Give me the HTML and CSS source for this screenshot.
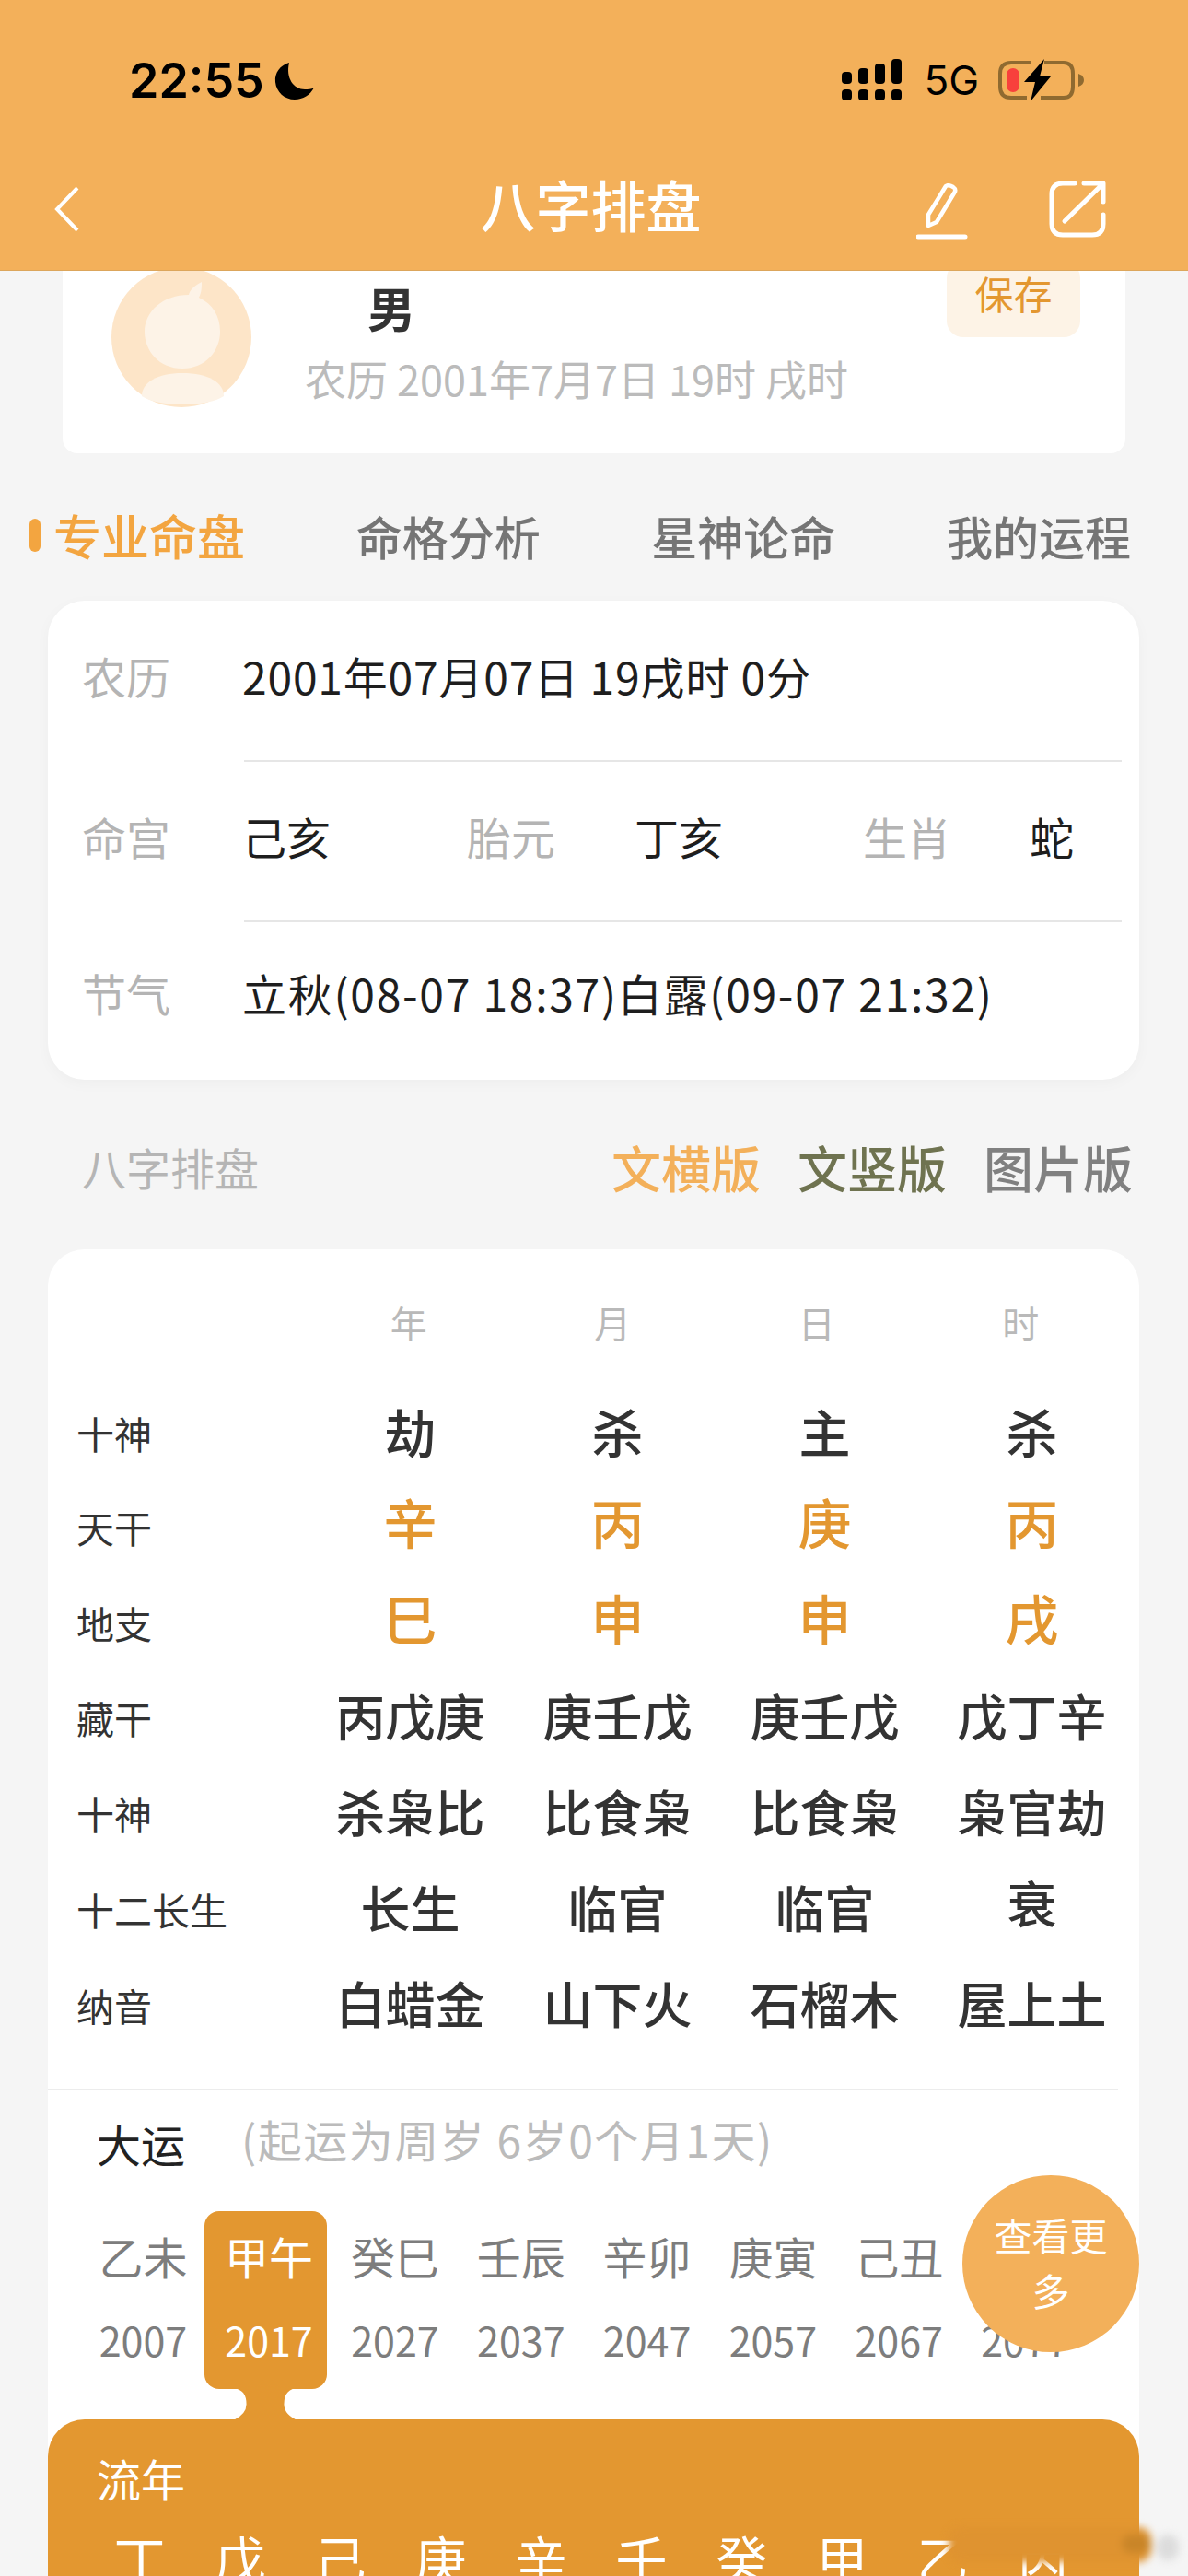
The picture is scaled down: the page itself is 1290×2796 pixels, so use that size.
FILE: index.html
```html
<!DOCTYPE html>
<html lang="zh-CN">
<head>
    <meta charset="UTF-8">
    <meta name="viewport" content="width=device-width, initial-scale=1.0">
    <title>八字排盘</title>
    <link rel="stylesheet" href="styles.css">
</head>
<body>
    <div class="page">
        <header class="header">
            <div class="status-bar">
                <div class="status-left">
                    <span class="time">22:55</span>
                    <svg class="moon" viewBox="0 0 44 42"><path d="M16 1C6 4 0 12 1 22c1 11 10 19 21 19 9 0 17-5 21-13-3 2-7 2-10 2C21 30 12 18 16 1z" fill="#000"/></svg>
                </div>
                <div class="status-right">
                    <svg class="signal" viewBox="0 0 66 46">
                        <g fill="#000">
                            <rect x="0" y="14" width="11" height="13" rx="4"/>
                            <rect x="18" y="10" width="11" height="17" rx="4"/>
                            <rect x="36" y="5" width="11" height="22" rx="4"/>
                            <rect x="54" y="0" width="11" height="27" rx="4"/>
                            <rect x="0" y="33" width="11" height="12" rx="4"/>
                            <rect x="18" y="33" width="11" height="12" rx="4"/>
                            <rect x="36" y="33" width="11" height="12" rx="4"/>
                            <rect x="54" y="33" width="11" height="12" rx="4"/>
                        </g>
                    </svg>
                    <span class="net">5G</span>
                    <svg class="battery" viewBox="0 0 94 46">
                        <path d="M36 4H14Q2 4 2 16V30Q2 42 14 42H31M50 4H71Q81 4 81 16V30Q81 42 71 42H46" fill="none" stroke="#8f6a30" stroke-width="4"/>
                        <path d="M87 16q6 2 6 7t-6 7z" fill="#8f6a30"/>
                        <rect x="9" y="10" width="14" height="26" rx="7" fill="#f8403c"/>
                        <path d="M50 0L28 25H40L35 46L57 19H45z" fill="#000"/>
                    </svg>
                </div>
            </div>
            <div class="nav-bar">
                <svg class="back" viewBox="0 0 30 50"><path d="M26 2L4 25l22 23" fill="none" stroke="#fff" stroke-width="4"/></svg>
                <div class="nav-title">八字排盘</div>
                <div class="nav-icons">
                    <svg class="pen" viewBox="0 0 56 62">
                        <path d="M13 46V34L32 3q3-2 8 1q3 2 2 5L22 42z" fill="none" stroke="#fff" stroke-width="4.5" stroke-linejoin="round"/>
                        <path d="M2 58H53" stroke="#fff" stroke-width="5" stroke-linecap="round"/>
                    </svg>
                    <svg class="share" viewBox="0 0 62 62">
                        <path d="M28 3H15Q3 3 3 15V47Q3 59 15 59H47Q59 59 59 47V37" fill="none" stroke="#fff" stroke-width="5" stroke-linecap="round"/>
                        <path d="M17 44L57 5M38 3H59V23" fill="none" stroke="#fff" stroke-width="5" stroke-linecap="round" stroke-linejoin="round"/>
                    </svg>
                </div>
            </div>
        </header>

        <section class="profile">
            <div class="avatar">
                <svg viewBox="0 0 152 152">
                    <circle cx="76" cy="76" r="76" fill="#fde5c8"/>
                    <path d="M84 30c1-5 5-9 14-14c0 6 0 11-3 17c15 7 23 20 23 37c0 21-16 40-41 40s-41-19-41-40c0-22 20-40 48-40z" fill="#fdf3e7"/>
                    <path d="M33 140C33 125 50 115 77 115C105 115 122 125 122 140C105 152 50 152 33 140z" fill="#fdf3e7"/>
                </svg>
            </div>
            <div class="profile-text">
                <div class="gender">男</div>
                <div class="birth">农历 2001年7月7日 19时 戌时</div>
            </div>
            <div class="save">保存</div>
        </section>

        <nav class="tabs">
            <div class="tab tab-active">专业命盘</div>
            <div class="tab">命格分析</div>
            <div class="tab">星神论命</div>
            <div class="tab">我的运程</div>
        </nav>

        <section class="info-card">
            <div class="info-row">
                <span class="info-label">农历</span>
                <span class="info-value info-date">2001年07月07日 19戌时 0分</span>
            </div>
            <div class="info-row info-row-mid">
                <span class="info-label">命宫</span>
                <span class="info-value info-w244">己亥</span>
                <span class="info-label info-w182">胎元</span>
                <span class="info-value info-w249">丁亥</span>
                <span class="info-label info-w181">生肖</span>
                <span class="info-value">蛇</span>
            </div>
            <div class="info-row info-row-last">
                <span class="info-label">节气</span>
                <span class="info-value info-term">立秋(08-07 18:37)白露(09-07 21:32)</span>
            </div>
        </section>

        <div class="section-head">
            <span class="section-title">八字排盘</span>
            <div class="versions">
                <span class="ver-orange">文横版</span>
                <span class="ver-olive">文竖版</span>
                <span class="ver-grey">图片版</span>
            </div>
        </div>

        <section class="chart-card">
            <div class="chart-head">
                <span>年</span><span>月</span><span>日</span><span>时</span>
            </div>
            <div class="chart-row chart-first"><span class="row-label">十神</span><span>劫</span><span>杀</span><span>主</span><span>杀</span></div>
            <div class="chart-row chart-orange"><span class="row-label">天干</span><span>辛</span><span>丙</span><span>庚</span><span>丙</span></div>
            <div class="chart-row chart-orange"><span class="row-label">地支</span><span>巳</span><span>申</span><span>申</span><span>戌</span></div>
            <div class="chart-row"><span class="row-label">藏干</span><span>丙戊庚</span><span>庚壬戊</span><span>庚壬戊</span><span>戊丁辛</span></div>
            <div class="chart-row"><span class="row-label">十神</span><span>杀枭比</span><span>比食枭</span><span>比食枭</span><span>枭官劫</span></div>
            <div class="chart-row"><span class="row-label">十二长生</span><span>长生</span><span>临官</span><span>临官</span><span class="cell-up">衰</span></div>
            <div class="chart-row"><span class="row-label">纳音</span><span>白蜡金</span><span>山下火</span><span>石榴木</span><span>屋上土</span></div>

            <div class="dayun-head">
                <span class="dayun-title">大运</span>
                <span class="dayun-note">(起运为周岁 6岁0个月1天)</span>
            </div>
            <div class="dayun-list">
                <div class="dayun"><span>乙未</span><span class="year">2007</span></div>
                <div class="dayun dayun-active">
                    <span>甲午</span><span class="year">2017</span>
                    <svg class="dayun-neck" viewBox="0 0 96 37"><path d="M10 0H86Q69 0 69 18Q69 30 86 37H10Q27 30 27 18Q27 0 10 0z" fill="#e39730"/></svg>
                </div>
                <div class="dayun"><span>癸巳</span><span class="year">2027</span></div>
                <div class="dayun"><span>壬辰</span><span class="year">2037</span></div>
                <div class="dayun"><span>辛卯</span><span class="year">2047</span></div>
                <div class="dayun"><span>庚寅</span><span class="year">2057</span></div>
                <div class="dayun"><span>己丑</span><span class="year">2067</span></div>
                <div class="dayun"><span>戊子</span><span class="year">2077</span></div>
                <div class="more">查看更<br>多</div>
            </div>
            <div class="liunian">
                <div class="liunian-title">流年</div>
                <div class="liunian-row">
                    <span>丁</span><span>戊</span><span>己</span><span>庚</span><span>辛</span><span>壬</span><span>癸</span><span>甲</span><span>乙</span><span>丙</span>
                </div>
            </div>
        </section>
        <div class="watermark"></div>
    </div>
</body>
</html>
```

FILE: styles.css
```css
* {
    box-sizing: border-box;
}

body {
    margin: 0;
    font-family: "Noto Sans CJK SC", "Noto Sans", sans-serif;
    background-color: #f5f5f5;
}

.page {
    position: relative;
    width: 1290px;
    height: 2796px;
    overflow: hidden;
    background-color: #f5f5f5;
}

/* header */
.header {
    height: 294px;
    background-color: #f3b05a;
    border-bottom: 1px solid #dca65c;
    position: relative;
    z-index: 2;
}

.status-bar {
    height: 176px;
    padding: 60px 112px 0 140px;
    display: flex;
    justify-content: space-between;
    align-items: flex-start;
}

.status-left {
    display: flex;
    align-items: center;
    gap: 11px;
    height: 56px;
}

.time {
    font-family: Inter, "Liberation Sans", sans-serif;
    font-size: 52px;
    font-weight: 600;
    line-height: 56px;
    color: #000;
}

.moon {
    width: 44px;
    height: 42px;
}

.status-right {
    display: flex;
    align-items: center;
    height: 50px;
    margin-top: 2px;
}

.signal {
    width: 66px;
    height: 46px;
}

.net {
    font-family: Inter, "Liberation Sans", sans-serif;
    font-size: 44px;
    line-height: 50px;
    color: #000;
    margin-left: 23px;
    margin-right: 21px;
}

.battery {
    width: 94px;
    height: 46px;
}

.nav-bar {
    height: 117px;
    padding: 0 89px 0 58px;
    display: grid;
    grid-template-columns: 1fr auto 1fr;
    align-items: flex-start;
}

.back {
    width: 30px;
    height: 50px;
    margin-top: 26px;
}

.nav-title {
    font-size: 60px;
    font-weight: 500;
    line-height: 90px;
    color: #fff;
    margin-left: 24px;
}

.nav-icons {
    display: flex;
    justify-content: flex-end;
    gap: 88px;
    padding-top: 20px;
}

.pen {
    width: 56px;
    height: 62px;
    margin-top: 3px;
}

.share {
    width: 62px;
    height: 62px;
}

/* profile card */
.profile {
    height: 198px;
    margin: 0 68px 0 68px;
    padding-left: 53px;
    background-color: #fff;
    border-radius: 0 0 16px 16px;
    display: flex;
    align-items: flex-start;
    position: relative;
}

.avatar {
    width: 152px;
    height: 152px;
    margin-top: -4px;
}

.avatar svg {
    display: block;
}

.profile-text {
    margin-left: 58px;
    padding-top: 5px;
}

.gender {
    font-size: 52px;
    font-weight: 700;
    line-height: 70px;
    color: #333;
    padding-left: 68px;
}

.birth {
    font-size: 45px;
    line-height: 60px;
    margin-top: 12px;
    color: #bbb;
}

.save {
    position: absolute;
    top: -10px;
    right: 49px;
    width: 145px;
    height: 82px;
    line-height: 68px;
    text-align: center;
    font-size: 42px;
    color: #e39730;
    background-color: #fdf3e6;
    border-radius: 18px;
}

/* tabs */
.tabs {
    height: 160px;
    padding: 18px 62px 0 58px;
    display: flex;
    justify-content: space-between;
    align-items: center;
}

.tab {
    font-size: 50px;
    font-weight: 500;
    line-height: 70px;
    color: #757575;
}

.tab-active {
    position: relative;
    font-size: 52px;
    color: #f3a540;
}

.tab-active::before {
    content: "";
    position: absolute;
    left: -26px;
    top: 17px;
    width: 12px;
    height: 36px;
    border-radius: 6px;
    background-color: #f3a540;
}

/* info card */
.info-card {
    height: 520px;
    margin: 0 53px 0 52px;
    padding: 0 19px 0 37px;
    background-color: #fff;
    border-radius: 40px;
    box-shadow: 0 4px 16px rgba(0, 0, 0, 0.03);
}

.info-row {
    height: 173px;
    padding-bottom: 12px;
    display: flex;
    align-items: center;
    font-size: 48px;
}

.info-row-mid {
    position: relative;
    height: 176px;
}

.info-row-last {
    padding-bottom: 22px;
}

.info-row-mid::before,
.info-row-mid::after {
    content: "";
    position: absolute;
    left: 176px;
    right: 0;
    height: 2px;
    background-color: #e6e6e6;
}

.info-row-mid::before {
    top: 0;
}

.info-row-mid::after {
    bottom: 0;
}

.info-label {
    width: 174px;
    color: #b4b4b4;
    flex-shrink: 0;
}

.info-value {
    color: #1e1e1e;
}

.info-date {
    letter-spacing: 0.8px;
}

.info-term {
    letter-spacing: 1.7px;
}

.info-w244 {
    width: 244px;
}

.info-w182 {
    width: 182px;
}

.info-w249 {
    width: 248px;
}

.info-w181 {
    width: 181px;
}

/* section title */
.section-head {
    height: 184px;
    padding: 4px 60px 0 89px;
    display: flex;
    justify-content: space-between;
    align-items: center;
}

.section-title {
    font-size: 48px;
    color: #b5b5b5;
}

.versions {
    display: flex;
    gap: 40px;
    font-size: 54px;
    font-weight: 500;
}

.ver-orange {
    color: #f3b05a;
}

.ver-olive {
    color: #6f7350;
}

.ver-grey {
    color: #808080;
}

/* chart card */
.chart-card {
    height: 1500px;
    margin: 0 53px 0 52px;
    background-color: #fff;
    border-radius: 40px 40px 0 0;
    position: relative;
}

.chart-head {
    height: 147px;
    padding: 49px 0 0 281px;
    display: grid;
    grid-template-columns: repeat(4, 221.5px);
    justify-items: center;
    font-size: 40px;
    line-height: 60px;
    color: #b9b9b9;
    align-content: start;
}

.chart-row {
    height: 104px;
    padding-left: 31px;
    display: grid;
    grid-template-columns: 250px repeat(4, 225px);
    justify-items: center;
    align-items: center;
    font-size: 54px;
    font-weight: 500;
    color: #333;
}

.chart-first {
    height: 98px;
    font-size: 56px;
}

.chart-orange {
    padding-bottom: 4px;
    color: #e39730;
    font-size: 58px;
}

.row-label {
    justify-self: start;
    font-size: 41px;
    color: #333;
    font-weight: 400;
    padding-top: 6px;
}

.chart-orange .row-label {
    padding-top: 12px;
}

.cell-up {
    padding-bottom: 10px;
}

.dayun-head {
    margin: 42px 23px 0 0;
    padding: 14px 0 0 53px;
    height: 102px;
    border-top: 2px solid #ececec;
    display: flex;
    align-items: center;
    gap: 61px;
    line-height: 70px;
}

.dayun-title {
    font-size: 48px;
    color: #222;
}

.dayun-note {
    font-size: 48px;
    letter-spacing: 1.5px;
    color: #bbb;
    padding-bottom: 10px;
}

.dayun-list {
    position: relative;
    height: 257px;
    padding-left: 35px;
    display: flex;
}

.dayun {
    width: 136.8px;
    height: 193px;
    margin-top: 31px;
    flex-shrink: 0;
    display: flex;
    flex-direction: column;
    align-items: center;
    padding-top: 13px;
    font-size: 48px;
    line-height: 70px;
    color: #7d7d7d;
}

.dayun .year {
    font-size: 43px;
    line-height: 60px;
    margin-top: 26px;
}

.dayun-active {
    position: relative;
    width: 133px;
    margin-left: -1.8px;
    margin-right: 5.6px;
    padding-left: 7px;
    color: #fff;
    background-color: #e39730;
    border-radius: 16px;
}

.dayun-neck {
    position: absolute;
    left: 18px;
    bottom: -35px;
    width: 96px;
    height: 36px;
}

.more {
    position: absolute;
    top: -8px;
    right: 0;
    width: 192px;
    height: 192px;
    padding-top: 34px;
    border-radius: 50%;
    background-color: #f3b05a;
    color: #fff;
    font-size: 41px;
    line-height: 60px;
    text-align: center;
}

.liunian {
    height: 300px;
    background-color: #e39730;
    border-radius: 40px 40px 0 0;
    position: relative;
    color: #fff;
    padding: 28px 0 0 53px;
}

.liunian-title {
    font-size: 48px;
    line-height: 70px;
}

.liunian-row {
    display: grid;
    grid-template-columns: repeat(10, 109px);
    justify-items: center;
    margin: 14px 0 0 -8px;
    font-size: 56px;
    line-height: 76px;
}

/* smudged-out watermark over the bottom right corner */
.watermark {
    position: absolute;
    left: 1030px;
    top: 2743px;
    width: 220px;
    height: 38px;
    border-radius: 14px;
    background-color: #df9330;
    filter: blur(4px);
    z-index: 3;
}

.watermark::before {
    content: "";
    position: absolute;
    left: 188px;
    top: 8px;
    width: 32px;
    height: 20px;
    border-radius: 10px;
    background-color: #c98528;
}

.watermark::after {
    content: "";
    position: absolute;
    left: 226px;
    top: 8px;
    width: 24px;
    height: 28px;
    border-radius: 12px;
    background-color: #dcdcdc;
}
```
